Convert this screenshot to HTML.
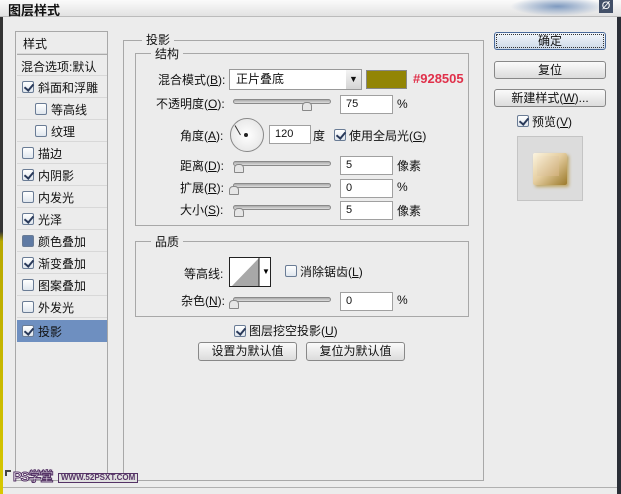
<!DOCTYPE html>
<html><head><meta charset="utf-8"><style>
*{margin:0;padding:0;box-sizing:border-box}
body{width:621px;height:494px;overflow:hidden;background:#ececec;font-family:"Liberation Sans","Noto Sans CJK SC",sans-serif;font-size:12px;color:#111;position:relative}
.a{position:absolute;white-space:nowrap}
.cb{position:absolute;width:12px;height:12px;border:1px solid #6a7c95;background:linear-gradient(#fff,#dfe6ee);border-radius:2px}
.cb.on::after{content:"";position:absolute;left:3px;top:0px;width:4px;height:7px;border:solid #2a3a5a;border-width:0 2px 2px 0;transform:rotate(40deg)}
.box{position:absolute;border:1px solid #a8a8a8}
.lg{position:absolute;background:#ececec;padding:0 4px;font-size:12px}
.in{position:absolute;background:#fff;border:1px solid #a0a0a0;height:19px;padding-left:5px;line-height:17px;font-size:11px}
.sl{position:absolute;height:5px;border:1px solid #8a8a8a;border-radius:3px;background:linear-gradient(#aaa,#ddd)}
.th{position:absolute;width:10px;height:9px;background:#e6e6e6;border:1px solid #888;border-radius:4px 4px 1px 1px}
.btn{position:absolute;border:1px solid #888;border-radius:3px;background:linear-gradient(#fafafa,#dcdcdc);text-align:center;font-size:12px;line-height:16px}
.row{position:absolute;left:17px;width:90px;height:22px;border-bottom:1px solid #d8d8d8}
.row span{position:absolute;top:3px}
</style></head><body>
<div class="a" style="left:0;top:0;width:621px;height:17px;background:linear-gradient(#fbfbfb,#e2e2e2);border-bottom:1px solid #bbb"></div>
<div class="a" style="left:8px;top:0;font-weight:bold;font-size:13px">图层样式</div>
<div class="a" style="left:510px;top:0;width:95px;height:16px;background:radial-gradient(ellipse at 50% 40%,#7e9ac0,rgba(220,228,238,0) 70%)"></div>
<div class="a" style="left:599px;top:0;width:14px;height:13px;background:#435068;color:#fff;font-size:11px;text-align:center;line-height:13px">Ø</div>
<div class="a" style="left:0;top:17px;width:3px;height:477px;background:linear-gradient(#333 0,#333 45%,#b8a800 47%,#d8c800 100%)"></div>
<div class="a" style="left:617px;top:17px;width:4px;height:477px;background:#2a2e36"></div>
<div class="a" style="left:3px;top:487px;width:614px;height:1px;background:#b0b0b0"></div>

<div class="box" style="left:15px;top:31px;width:93px;height:450px;background:#ececec"></div>
<div class="row" style="top:32px"><span style="left:6px">样式</span></div>
<div class="row" style="top:54px;border-top:1px solid #aaa"><span style="left:4px">混合选项:默认</span></div>
<div class="row" style="top:76px"><i class="cb on" style="left:5px;top:5px"></i><span style="left:21px">斜面和浮雕</span></div>
<div class="row" style="top:98px"><i class="cb" style="left:18px;top:5px"></i><span style="left:34px">等高线</span></div>
<div class="row" style="top:120px"><i class="cb" style="left:18px;top:5px"></i><span style="left:34px">纹理</span></div>
<div class="row" style="top:142px"><i class="cb" style="left:5px;top:5px"></i><span style="left:21px">描边</span></div>
<div class="row" style="top:164px"><i class="cb on" style="left:5px;top:5px"></i><span style="left:21px">内阴影</span></div>
<div class="row" style="top:186px"><i class="cb" style="left:5px;top:5px"></i><span style="left:21px">内发光</span></div>
<div class="row" style="top:208px"><i class="cb on" style="left:5px;top:5px"></i><span style="left:21px">光泽</span></div>
<div class="row" style="top:230px"><i class="cb" style="left:5px;top:5px;background:#5f7aa3"></i><span style="left:21px">颜色叠加</span></div>
<div class="row" style="top:252px"><i class="cb on" style="left:5px;top:5px"></i><span style="left:21px">渐变叠加</span></div>
<div class="row" style="top:274px"><i class="cb" style="left:5px;top:5px"></i><span style="left:21px">图案叠加</span></div>
<div class="row" style="top:296px"><i class="cb" style="left:5px;top:5px"></i><span style="left:21px">外发光</span></div>
<div class="row" style="top:320px;background:#6e8fc0;border:none"><i class="cb on" style="left:5px;top:5px"></i><span style="left:21px">投影</span></div>

<div class="box" style="left:123px;top:40px;width:361px;height:441px"></div>
<div class="lg" style="left:142px;top:31px">投影</div>
<div class="box" style="left:135px;top:53px;width:334px;height:173px"></div>
<div class="lg" style="left:151px;top:45px">结构</div>

<div class="a" style="left:158px;top:71px">混合模式(<u>B</u>):</div>
<div class="a" style="left:229px;top:69px;width:133px;height:21px;background:#fff;border:1px solid #999;padding-left:6px;line-height:19px">正片叠底</div>
<div class="a" style="left:346px;top:70px;width:15px;height:19px;background:linear-gradient(#f4f4f4,#d4d4d4);font-size:9px;text-align:center;line-height:19px">▼</div>
<div class="a" style="left:366px;top:70px;width:41px;height:19px;background:#928505;border:1px solid #888"></div>
<div class="a" style="left:413px;top:71px;color:#e0304a;font-weight:bold;font-size:13px">#928505</div>

<div class="a" style="left:156px;top:95px">不透明度(<u>O</u>):</div>
<div class="sl" style="left:233px;top:99px;width:98px"></div><div class="th" style="left:302px;top:102px"></div>
<div class="in" style="left:340px;top:95px;width:53px">75</div><div class="a" style="left:397px;top:97px">%</div>

<div class="a" style="left:180px;top:127px">角度(<u>A</u>):</div>
<div class="a" style="left:230px;top:118px;width:34px;height:34px;border-radius:50%;border:1px solid #888;background:radial-gradient(#fff,#e0e0e0)"></div>
<div class="a" style="left:240px;top:124px;width:1px;height:11px;background:#333;transform:rotate(-30deg);transform-origin:bottom"></div>
<div class="a" style="left:244px;top:133px;width:4px;height:4px;border-radius:50%;background:#222"></div>
<div class="in" style="left:269px;top:125px;width:42px">120</div>
<div class="a" style="left:313px;top:127px">度</div>
<i class="cb on" style="left:334px;top:129px"></i>
<div class="a" style="left:349px;top:127px">使用全局光(<u>G</u>)</div>

<div class="a" style="left:180px;top:157px">距离(<u>D</u>):</div>
<div class="sl" style="left:233px;top:161px;width:98px"></div><div class="th" style="left:234px;top:164px"></div>
<div class="in" style="left:340px;top:156px;width:53px">5</div><div class="a" style="left:397px;top:157px">像素</div>

<div class="a" style="left:180px;top:179px">扩展(<u>R</u>):</div>
<div class="sl" style="left:233px;top:183px;width:98px"></div><div class="th" style="left:229px;top:186px"></div>
<div class="in" style="left:340px;top:179px;width:53px">0</div><div class="a" style="left:397px;top:180px">%</div>

<div class="a" style="left:180px;top:201px">大小(<u>S</u>):</div>
<div class="sl" style="left:233px;top:205px;width:98px"></div><div class="th" style="left:234px;top:208px"></div>
<div class="in" style="left:340px;top:201px;width:53px">5</div><div class="a" style="left:397px;top:202px">像素</div>

<div class="box" style="left:135px;top:241px;width:334px;height:76px"></div>
<div class="lg" style="left:151px;top:233px">品质</div>
<div class="a" style="left:184px;top:265px">等高线:</div>
<div class="a" style="left:229px;top:257px;width:42px;height:30px;border:1px solid #222;background:#fff;overflow:hidden">
<svg width="42" height="30" style="position:absolute;left:0;top:0"><polygon points="0,30 29,0 29,30" fill="#a8a8a8"/><line x1="29" y1="0" x2="29" y2="30" stroke="#222"/><text x="32" y="16" font-size="8" font-family="Liberation Sans">▼</text></svg></div>
<i class="cb" style="left:285px;top:265px"></i>
<div class="a" style="left:300px;top:263px">消除锯齿(<u>L</u>)</div>
<div class="a" style="left:181px;top:292px">杂色(<u>N</u>):</div>
<div class="sl" style="left:233px;top:297px;width:98px"></div><div class="th" style="left:229px;top:300px"></div>
<div class="in" style="left:340px;top:292px;width:53px">0</div><div class="a" style="left:397px;top:293px">%</div>

<i class="cb on" style="left:234px;top:325px"></i>
<div class="a" style="left:249px;top:322px">图层挖空投影(<u>U</u>)</div>
<div class="btn" style="left:198px;top:342px;width:99px;height:19px">设置为默认值</div>
<div class="btn" style="left:306px;top:342px;width:99px;height:19px">复位为默认值</div>

<div class="btn" style="left:494px;top:32px;width:112px;height:18px;background:linear-gradient(#f2f6fb,#cdd9e8);border:1px solid #4a6a9a;outline:1px dotted #333;outline-offset:-3px">确定</div>
<div class="btn" style="left:494px;top:61px;width:112px;height:18px">复位</div>
<div class="btn" style="left:494px;top:89px;width:112px;height:18px">新建样式(<u>W</u>)...</div>
<i class="cb on" style="left:517px;top:115px"></i>
<div class="a" style="left:532px;top:113px">预览(<u>V</u>)</div>
<div class="a" style="left:517px;top:136px;width:66px;height:65px;background:#dcdcdc;border:1px solid #c4c4c4"></div>
<div class="a" style="left:533px;top:153px;width:34px;height:32px;background:linear-gradient(135deg,#fbf4e0 0%,#e6cfa2 45%,#9c7a2a 100%);box-shadow:2px 2px 3px #c0a868;border-radius:2px"></div>
<div class="a" style="left:537px;top:156px;width:22px;height:20px;background:linear-gradient(135deg,#f6ead0,#cfae78)"></div>

<div class="a" style="left:5px;top:470px;width:6px;height:6px;border-left:2px solid #444;border-top:2px solid #444"></div>
<div class="a" style="left:13px;top:470px;font-size:13px;font-weight:bold;color:#fff;-webkit-text-stroke:1px #553366;letter-spacing:-1px;line-height:13px">PS学堂</div>
<div class="a" style="left:58px;top:473px;font-size:8px;background:#e0e0e0;border:1px solid #553366;color:#553366;padding:0 2px;line-height:8px;font-weight:bold">WWW.52PSXT.COM</div>
</body></html>
